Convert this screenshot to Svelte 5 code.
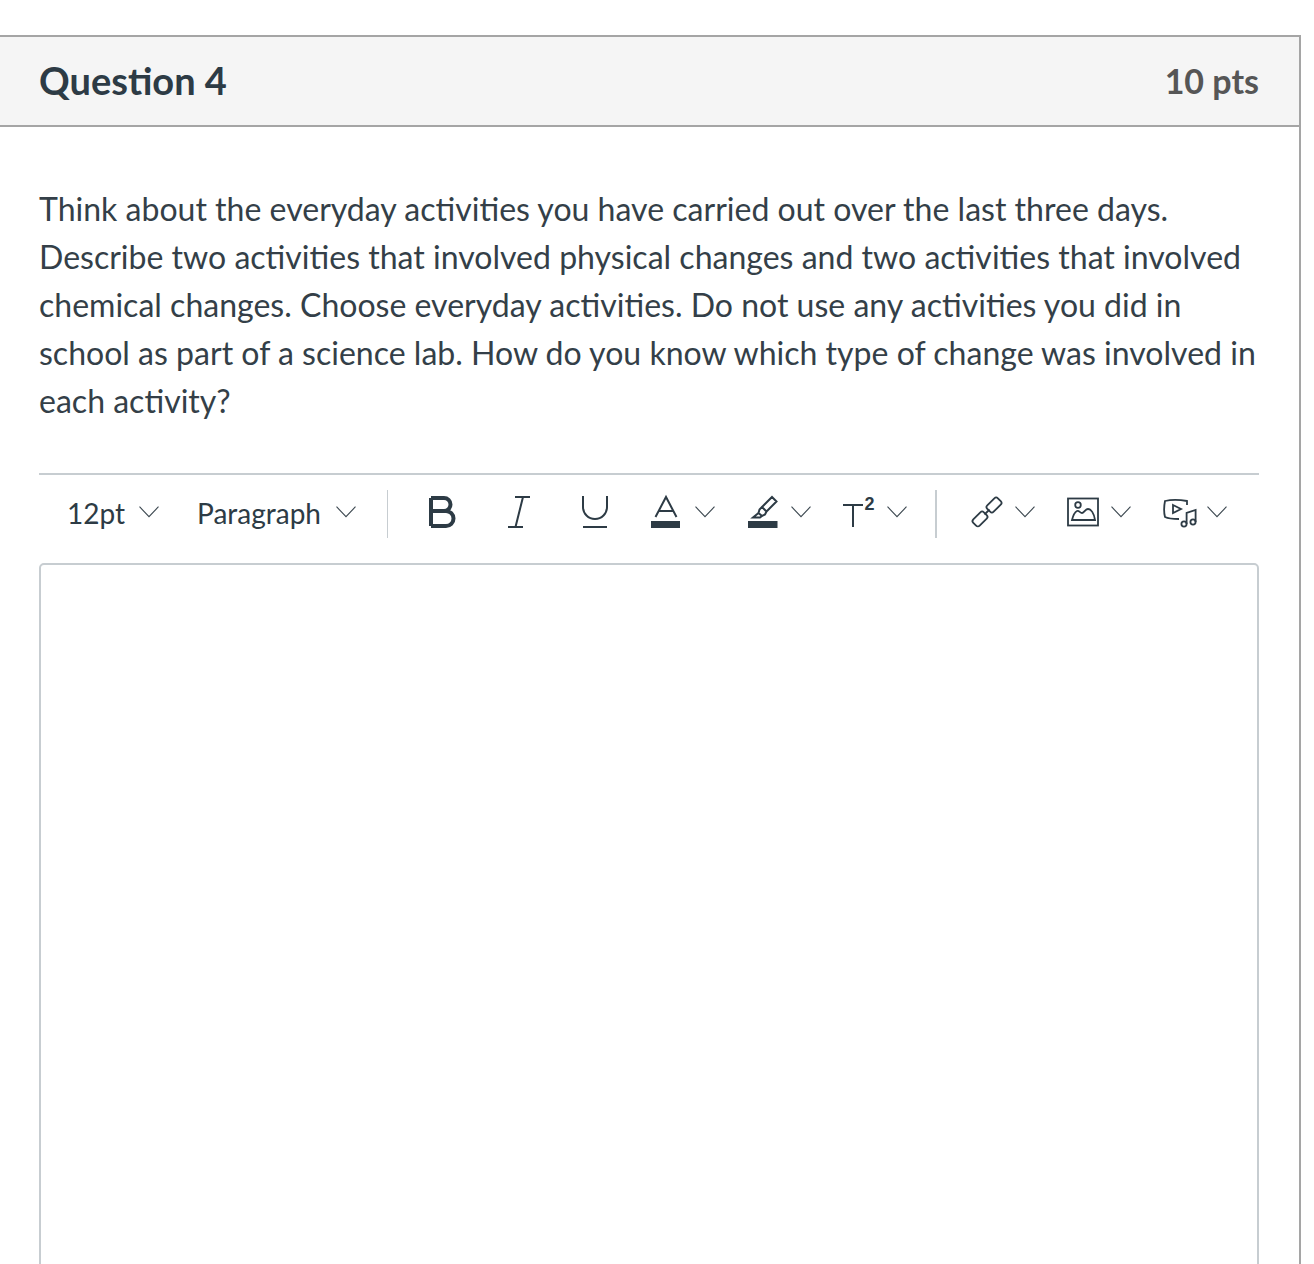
<script lang="ts">
  const question = "Think about the everyday activities you have carried out over the last three days. Describe two activities that involved physical changes and two activities that involved chemical changes. Choose everyday activities. Do not use any activities you did in school as part of a science lab. How do you know which type of change was involved in each activity?";
</script>

{#snippet chevron()}
  <svg class="chevron" width="20" height="12" viewBox="0 0 20 12" aria-hidden="true">
    <path d="M0.5 0.7 L10 10.6 L19.5 0.7" />
  </svg>
{/snippet}

<div class="page">
  <section class="card">
    <header class="card-head">
      <h2>Question 4</h2>
      <span class="pts">10 pts</span>
    </header>

    <div class="card-body">
      <p class="question">{question}</p>

      <div class="toolbar">
        <button class="select first"><span class="label">12pt</span> {@render chevron()}</button>
        <button class="select second"><span class="label">Paragraph</span> {@render chevron()}</button>
        <span class="sep sep-a"></span>

        <button class="icon plain" aria-label="Bold">
          <svg width="32" height="32" viewBox="0 0 32 32" class="line heavy">
            <path d="M4 2 V30 M4 2 H17 A6.5 6.5 0 0 1 17 15 H4 M17 15 H19 A7.5 7.5 0 0 1 19 30 H4" />
          </svg>
        </button>
        <button class="icon plain" aria-label="Italic">
          <svg width="32" height="32" viewBox="0 0 32 32" class="line">
            <path d="M12 1 H27 M5 31 H20 M20 1 L12.5 31" />
          </svg>
        </button>
        <button class="icon plain last" aria-label="Underline">
          <svg width="32" height="32" viewBox="0 0 32 32" class="line">
            <path d="M4 0 V11 A12 12 0 0 0 28 11 V0 M4 31 H28" />
          </svg>
        </button>

        <button class="icon split" aria-label="Text color">
          <svg width="32" height="32" viewBox="0 0 32 32" class="line">
            <path d="M4.5 21 L15 1 L25.5 21 M8 15 H22" />
            <rect class="solid" x="0" y="25" width="29" height="7" />
          </svg>
          {@render chevron()}
        </button>
        <button class="icon split" aria-label="Background color">
          <svg width="32" height="32" viewBox="0 0 32 32" class="line">
            <path transform="translate(1 0)" d="M24 1 L28.5 5.5 L18.5 15.5 L14 11 Z M14 11 L11.5 13.5 L10.5 17 L14 20 L17 18.5 L18.5 15.5 M10.5 17 L5 21.5 L12 21.5 L14 20" />
            <rect class="solid" x="1" y="25" width="29.5" height="7" />
          </svg>
          {@render chevron()}
        </button>
        <button class="icon split t2" aria-label="Superscript">
          <svg width="32" height="32" viewBox="0 0 32 32" class="line">
            <path d="M0 9 H20 M10 9 V31" />
            <text x="21.5" y="14" class="sup">2</text>
          </svg>
          {@render chevron()}
        </button>
        <span class="sep sep-b"></span>

        <button class="icon split" aria-label="Link">
          <svg width="32" height="32" viewBox="0 0 32 32" class="line thin">
            <rect x="15.5" y="4.5" width="15" height="9" rx="2.5" transform="rotate(-45 23 9)" />
            <rect x="1.5" y="18.5" width="15" height="9" rx="2.5" transform="rotate(-45 9 23)" />
            <path d="M13.5 18.5 L18.5 13.5" />
          </svg>
          {@render chevron()}
        </button>
        <button class="icon split" aria-label="Image">
          <svg width="32" height="32" viewBox="0 0 32 32" class="line thin">
            <rect x="1" y="2.5" width="30" height="27" />
            <circle cx="11" cy="9" r="2.8" />
            <path d="M5 24 H28 C27 17 24 13 21 13 C18 13 17 17 15 17 C13 17 12 14 10 15 C8 16 6 20 5 24 Z" />
          </svg>
          {@render chevron()}
        </button>
        <button class="icon split" aria-label="Media">
          <svg width="32" height="32" viewBox="0 0 32 32" class="line thin">
            <path d="M24 9 V5 C16 3.5 8 3.5 2 5 C1 10 1 17 2 21 C6 23 11 23 16 23" />
            <path d="M10 9 L18 13 L10 17 Z" />
            <circle cx="21" cy="28" r="2.6" />
            <circle cx="30" cy="26" r="2.6" />
            <path d="M23.6 28 V17 L32.6 14 V26" />
          </svg>
          {@render chevron()}
        </button>
      </div>

      <div class="editor"></div>
    </div>
  </section>
</div>

<style>
  :global(body) {
    margin: 0;
    background: #fff;
  }

  .page {
    height: 1264px;
    overflow: hidden;
    padding-top: 35px;
    box-sizing: border-box;
    font-family: Lato, "Liberation Sans", sans-serif;
    color: #2d3b45;
  }

  .card {
    width: 1301px;
    border-right: 2px solid #a5a5a5;
    box-sizing: border-box;
  }

  .card-head {
    height: 92px;
    box-sizing: border-box;
    display: flex;
    align-items: center;
    justify-content: space-between;
    padding: 0 40px 2px 39px;
    background: #f5f5f5;
    border-top: 2px solid #a5a5a5;
    border-bottom: 2px solid #a5a5a5;
  }

  h2 {
    margin: 0;
    font-size: 38px;
    font-weight: 700;
    line-height: 1;
  }

  .pts {
    font-size: 34px;
    font-weight: 700;
    color: #565656;
  }

  .card-body {
    padding: 58px 40px 0 39px;
  }

  .question {
    margin: 0;
    font-size: 32.04px;
    line-height: 48px;
    color: #343f48;
  }

  .toolbar {
    margin-top: 48px;
    border-top: 2px solid #c7cdd1;
    height: 90px;
    box-sizing: border-box;
    padding: 15px 0 0 28px;
    display: flex;
    align-items: flex-start;
  }

  button {
    all: unset;
    display: flex;
    align-items: center;
    height: 48px;
    color: inherit;
  }

  .select {
    font-size: 28px;
    gap: 14px;
  }

  .label {
    position: relative;
    top: -1px;
  }

  .select .chevron {
    margin-top: -4px;
  }

  .first {
    margin-right: 38px;
  }

  .second {
    gap: 15px;
  }

  .sep {
    width: 2px;
    height: 48px;
    background: #c7cdd1;
  }

  .sep-a {
    margin: 0 39px 0 31px;
  }

  .sep-b {
    margin: 0 34px 0 28px;
  }

  .icon {
    align-items: flex-start;
    padding-top: 6px;
    height: 42px;
  }

  .plain {
    margin-right: 44px;
  }

  .plain.last {
    margin-right: 40px;
  }

  .split {
    gap: 12px;
    margin-right: 32px;
  }

  .split .chevron {
    margin-top: 10px;
  }

  .t2 {
    margin-right: 0;
  }

  .chevron path {
    fill: none;
    stroke: #3c4850;
    stroke-width: 1.1;
  }

  .line {
    fill: none;
    stroke: #2d3b45;
    stroke-width: 2;
    overflow: visible;
  }

  .line.heavy {
    stroke-width: 4;
  }

  .line.thin {
    stroke-width: 1.8;
  }

  .solid {
    fill: #2d3b45;
    stroke: none;
  }

  .sup {
    fill: #2d3b45;
    stroke: none;
    font-size: 18px;
    font-weight: 700;
    font-family: "Liberation Sans", sans-serif;
  }

  .editor {
    height: 760px;
    border: 2px solid #c7cdd1;
    border-radius: 5px;
    box-sizing: border-box;
  }
</style>
